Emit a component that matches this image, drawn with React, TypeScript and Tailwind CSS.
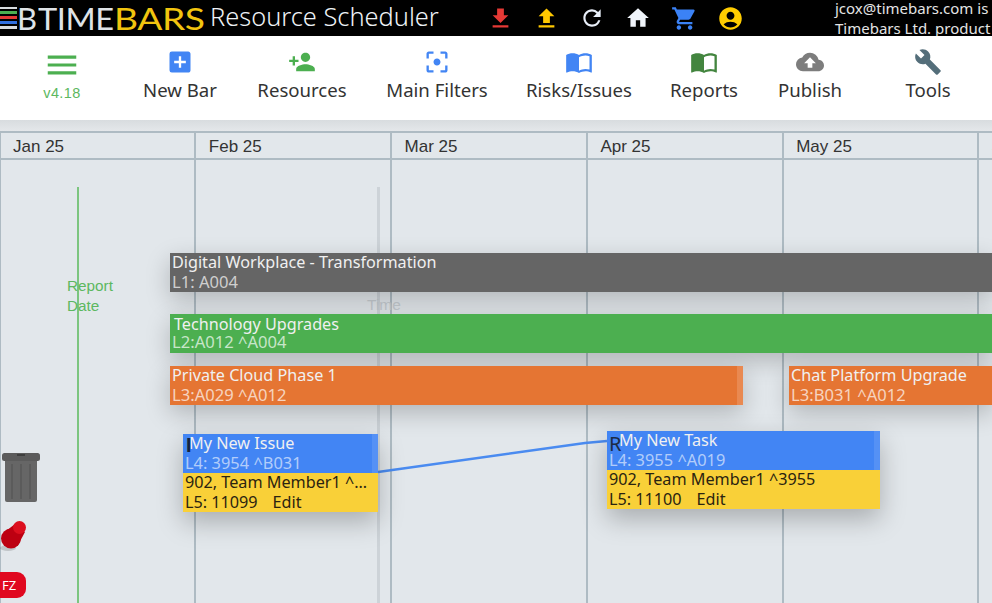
import React from "react";
import {
  MdFileDownload, MdFileUpload, MdRefresh, MdHome, MdShoppingCart, MdAccountCircle,
  MdMenu, MdAddBox, MdPersonAdd, MdFilterCenterFocus, MdImportContacts, MdCloudUpload, MdBuild,
} from "react-icons/md";

const tools = [
  { label: "New Bar", Icon: MdAddBox, cls: "w-[112px] text-[#4285f4]" },
  { label: "Resources", Icon: MdPersonAdd, cls: "w-[132px] text-[#4caf50]" },
  { label: "Main Filters", Icon: MdFilterCenterFocus, cls: "w-[138px] text-[#4285f4]" },
  { label: "Risks/Issues", Icon: MdImportContacts, cls: "w-[146px] text-[#4285f4]" },
  { label: "Reports", Icon: MdImportContacts, cls: "w-[104px] text-[#43853f]" },
  { label: "Publish", Icon: MdCloudUpload, cls: "w-[108px] text-[#7d7d7d]" },
  { label: "Tools", Icon: MdBuild, cls: "w-[128px] text-[#546e7a]" },
];

const months = ["Jan 25", "Feb 25", "Mar 25", "Apr 25", "May 25", "J"];

function Logo() {
  return (
    <div className="flex items-center h-9 w-[205px] overflow-hidden">
      <div className="flex flex-col w-[17px] h-[22px] justify-between shrink-0">
        <div className="h-[2px] bg-[#d8dcdf]" />
        <div className="h-[3px] bg-[#4caf50]" />
        <div className="h-[3px] bg-[#e53935]" />
        <div className="h-[3px] bg-[#2f6fe0]" />
        <div className="h-[3px] bg-[#d8dcdf]" />
      </div>
      <span className="text-[#dfe3e6] text-[31px] leading-none font-['Lato'] font-normal w-[21px] shrink-0">B</span>
      <span className="text-[#dfe3e6] text-[31px] leading-none font-['Lato'] font-normal tracking-[-0.4px] w-[76px] shrink-0 scale-x-[1.05] origin-left">TIME</span>
      <span className="text-[#f1c40f] text-[31px] leading-none font-['Lato'] font-normal tracking-[-0.4px] shrink-0 scale-x-[1.2] origin-left">BARS</span>
    </div>
  );
}

function Bar({ x, y, w, bg, line1, line2, strip, indent = 2, lh = 19, shift = 0 }: { x: number; y: number; w: number; bg: string; line1: string; line2: string; strip?: boolean; indent?: number; lh?: number; shift?: number }) {
  return (
    <div
      className="absolute h-[39px] shadow-[0_8px_24px_rgba(0,0,0,0.22)] overflow-hidden whitespace-nowrap"
      style={{ left: x, top: y, width: w, background: bg, lineHeight: `${lh}px` }}
    >
      <div style={{ marginTop: shift }}>
        <div className="text-[#f0f0f0] text-[16.2px]" style={{ paddingLeft: indent }}>{line1}</div>
        <div className="text-white/70 pl-[2px] text-[16.6px]">{line2}</div>
      </div>
      {strip && <div className="absolute right-0 top-0 bottom-0 w-[6px] bg-white/15" />}
    </div>
  );
}

function Card({ x, y, w, pad, title, l4, owner, l5 }: { x: number; y: number; w: number; pad: number; title: string; l4: string; owner: string; l5: string }) {
  return (
    <div className="absolute shadow-[0_10px_24px_rgba(0,0,0,0.25)] text-[16.2px] leading-[19px] whitespace-nowrap" style={{ left: x, top: y, width: w }}>
      <div className="relative h-[39px] bg-[#4285f4] overflow-hidden">
        <div className="text-[#f0f0f0]" style={{ paddingLeft: pad }}>{title}</div>
        <div className="text-white/60 pl-[2px] text-[16.4px]">{l4}</div>
        <div className="absolute right-0 top-0 bottom-0 w-[6px] bg-white/10" />
      </div>
      <div className="h-[39px] bg-[#f9d038] text-[#2b2410] overflow-hidden">
        <div className="pl-[2px] pr-[6px] truncate">{owner}</div>
        <div className="pl-[2px] mt-[1px]"><span>{l5}</span><span className="ml-[15px]">Edit</span></div>
      </div>
    </div>
  );
}

const topIcons = [
  { Icon: MdFileDownload, cls: "text-[#e53935]", w: "w-[46px]", size: 27 },
  { Icon: MdFileUpload, cls: "text-[#ffc800]", w: "w-[46px]", size: 27 },
  { Icon: MdRefresh, cls: "text-[#e8eef8]", w: "w-[46px]", size: 26 },
  { Icon: MdHome, cls: "text-[#f0f4fa]", w: "w-[46px]", size: 26 },
  { Icon: MdShoppingCart, cls: "text-[#3b82f6]", w: "w-[46px]", size: 27 },
  { Icon: MdAccountCircle, cls: "text-[#ffcc00]", w: "w-[47px]", size: 27 },
];

export default function App() {
  return (
    <div className="w-[992px] h-[603px] overflow-hidden flex flex-col bg-[#e2e7eb] font-['Noto_Sans','Open_Sans',sans-serif]">
      <header className="h-9 bg-black flex items-center shrink-0 overflow-hidden">
        <Logo />
        <span className="text-[#eef2f6] text-[25.4px] leading-none ml-[5px] w-[267px] whitespace-nowrap font-light -mt-[3px]">Resource Scheduler</span>
        <div className="flex items-center h-9">
          {topIcons.map(({ Icon, cls, w, size }, i) => (
            <div key={i} className={`flex justify-center ${w} ${cls}`}><Icon size={size} /></div>
          ))}
        </div>
        <div className="ml-[81px] text-[#e4e4e4] text-[15px] leading-[20px] whitespace-nowrap -mt-[1px]">
          <div>jcox@timebars.com is</div>
          <div>Timebars Ltd. product</div>
        </div>
      </header>

      <nav className="h-[84px] bg-white flex shrink-0">
        <div className="w-[124px] flex flex-col items-center pt-[10px]">
          <MdMenu className="text-[#4caf50]" size={38} />
          <span className="text-[#5cb860] text-[14.5px] leading-none font-['Liberation_Sans'] tracking-[0.4px] mt-[2px]">v4.18</span>
        </div>
        {tools.map(({ label, Icon, cls }) => (
          <div key={label} className={`flex flex-col items-center pt-[12px] ${cls}`}>
            <Icon size={28} />
            <span className="text-[#333] text-[18.6px] leading-[26px] mt-[1px] whitespace-nowrap">{label}</span>
          </div>
        ))}
      </nav>

      <div className="h-[11px] bg-gradient-to-b from-[#d8dcdf] to-[#e4e7ea] shrink-0" />

      <main className="relative flex-1 overflow-hidden">
        <div className="flex h-full -ml-[1.5px] border-t-[2px] border-[#aebbc3] font-['Liberation_Sans',sans-serif]">
          {months.map((m) => (
            <div key={m} className="w-[195.8px] shrink-0 flex flex-col border-l-[2px] border-[#aebbc3]">
              <div className="h-[27px] pl-[12.5px] text-[17px] leading-[28px] text-[#333] border-b-[2px] border-[#aebbc3]">{m}</div>
            </div>
          ))}
        </div>

        {/* Report date */}
        <div className="absolute left-[76.5px] top-[56px] bottom-0 w-[2.5px] bg-[#7cc57f]" />
        <div className="absolute left-[67px] top-[145px] text-[15.3px] leading-[19.5px] text-[#5cb860] font-['Liberation_Sans']">Report<br />Date</div>
        {/* Time */}
        <div className="absolute left-[377px] top-[56px] bottom-0 w-[2.5px] bg-[#cdd3d8]" />
        <div className="absolute left-[367px] top-[164px] text-[15.5px] leading-[19.5px] text-[#c6ccd1] font-['Liberation_Sans']">Time</div>

        <Bar x={170} y={122} w={822} bg="#656565" line1="Digital Workplace - Transformation" line2="L1: A004" lh={20} shift={-1} />
        <Bar x={170} y={183} w={822} bg="#4caf50" line1="Technology Upgrades" line2="L2:A012 ^A004" indent={4} lh={18} shift={1} />
        <Bar x={170} y={235} w={573} bg="#e57533" line1="Private Cloud Phase 1" line2="L3:A029 ^A012" strip />
        <Bar x={789} y={235} w={203} bg="#e57533" line1="Chat Platform Upgrade" line2="L3:B031 ^A012" />

        <svg className="absolute left-0 top-0 pointer-events-none" width="992" height="473" fill="none">
          <path d="M378 341 L 585 312 L 607 310" stroke="#4a8bf0" strokeWidth="2.5" />
        </svg>

        <Card x={183} y={303} w={195} pad={6} title="My New Issue" l4="L4: 3954 ^B031" owner="902, Team Member1 ^3954" l5="L5: 11099" />
        <Card x={607} y={300} w={273} pad={12} title="My New Task" l4="L4: 3955 ^A019" owner="902, Team Member1 ^3955" l5="L5: 11100" />
        <div className="absolute left-[186px] top-[302px] text-[20px] leading-[24px] font-semibold font-['Liberation_Sans'] text-[#15233d]">I</div>
        <div className="absolute left-[609px] top-[301px] text-[20px] leading-[24px] text-[#1c2b45]">R</div>

        {/* Trash */}
        <svg className="absolute left-[2px] top-[321px]" width="38" height="52" viewBox="0 0 38 52">
          <rect x="0" y="1" width="38" height="8" rx="2.5" fill="#5b5b5b" />
          <rect x="15" y="2" width="8" height="2" fill="#3e3e3e" />
          <path d="M3 9 H35 V48 a2 2 0 0 1 -2 2 H5 a2 2 0 0 1 -2 -2 Z" fill="#666" />
          <path d="M10 12 V47 M19 12 V47 M28 12 V47" stroke="#585858" strokeWidth="1.5" />
        </svg>
        {/* Pin */}
        <svg className="absolute left-0 top-[388px]" width="30" height="34" viewBox="0 0 30 34">
          <ellipse cx="8" cy="29" rx="8" ry="3" fill="#000" opacity="0.15" />
          <circle cx="11" cy="19.5" r="10" fill="#bd0011" />
          <path d="M15 5 L25 13 L18 26 L6 12 Z" fill="#bd0011" />
          <circle cx="19.5" cy="8.5" r="6.5" fill="#dc0f1e" />
        </svg>
        {/* FZ badge */}
        <div className="absolute left-0 top-[441px] w-[26px] h-[26px] bg-[#e0081f] rounded-r-[9px] text-white text-[13px] leading-[26px] pl-[2px]">FZ</div>
      </main>
    </div>
  );
}
